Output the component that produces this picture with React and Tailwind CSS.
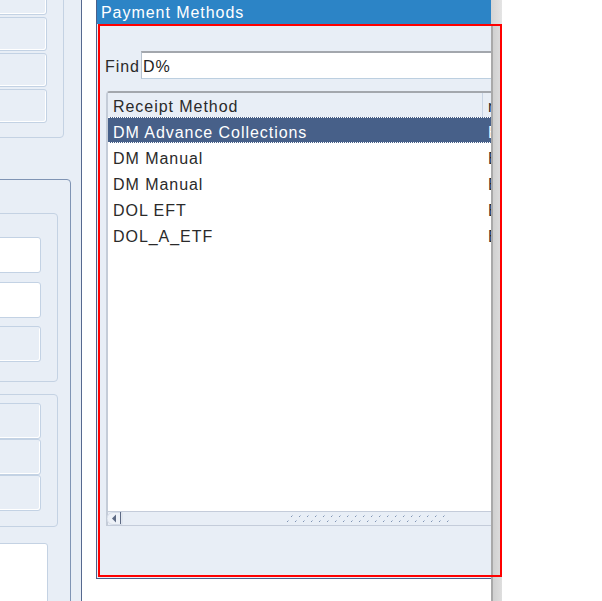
import React from "react";

const rows = [
  { name: "DM Advance Collections", bank: "Bank of America", sel: true },
  { name: "DM Manual", bank: "Bank of America" },
  { name: "DM Manual", bank: "Bank One" },
  { name: "DOL EFT", bank: "Bank One" },
  { name: "DOL_A_ETF", bank: "Bank One" },
];

function Grip() {
  const top = Array.from({ length: 20 }, (_, i) => 4 + i * 8);
  const bot = Array.from({ length: 21 }, (_, i) => 0 + i * 8);
  return (
    <svg width="164" height="10" viewBox="0 0 164 10" className="block">
      {top.map((x) => (
        <g key={"t" + x}>
          <rect x={x + 1} y={1} width="1" height="1" fill="#b8c6da" />
          <rect x={x} y={2} width="1" height="1" fill="#7f93b3" />
        </g>
      ))}
      {bot.map((x) => (
        <g key={"b" + x}>
          <rect x={x + 1} y={6} width="1" height="1" fill="#b8c6da" />
          <rect x={x} y={7} width="1" height="1" fill="#7f93b3" />
        </g>
      ))}
    </svg>
  );
}

function Btn({ h = "h-[34px]", w = "w-[66px]", white = false }) {
  return (
    <div
      className={`${h} ${w} shrink-0 rounded-[3px] border border-[#c3d2e4] ${
        white ? "bg-white" : "bg-[#e8eef6] shadow-[inset_-1px_-1px_0_#ffffff]"
      }`}
    />
  );
}

export default function App() {
  return (
    <div className="flex h-[601px] w-[602px] overflow-hidden bg-white font-['Liberation_Sans',Arial,sans-serif] text-[16px] tracking-[0.95px] relative">
      {/* left background form */}
      <div className="h-full w-[82px] shrink-0 overflow-hidden border-r border-[#56698f] bg-[#e8eef6] flex flex-col">
        <div className="-ml-[20px] -mt-[30px] h-[168px] w-[84px] shrink-0 rounded-br-[4px] border border-[#c4d2e3] pt-[10px] flex flex-col gap-[2px]">
          <Btn />
          <Btn />
          <Btn />
          <Btn />
        </div>
        <div className="-ml-[20px] mt-[41px] h-[500px] w-[91px] shrink-0 rounded-tr-[4px] border border-[#7f94b4] pt-[33px] flex flex-col">
          <div className="h-[169px] w-[77px] shrink-0 rounded-r-[4px] border border-[#c4d2e3] pt-[23px] flex flex-col">
            <Btn h="h-[36px]" w="w-[59px]" white />
            <div className="h-[9px]" />
            <Btn h="h-[36px]" w="w-[59px]" white />
            <div className="h-[8px]" />
            <Btn h="h-[36px]" w="w-[59px]" />
          </div>
          <div className="mt-[12px] h-[133px] w-[77px] shrink-0 rounded-r-[4px] border border-[#c4d2e3] pt-[8px] flex flex-col">
            <Btn h="h-[36px]" w="w-[59px]" />
            <Btn h="h-[36px]" w="w-[59px]" />
            <Btn h="h-[36px]" w="w-[59px]" />
          </div>
          <div className="mt-[16px] h-[200px] w-[67px] shrink-0 rounded-tr-[3px] border border-[#c4d2e3] bg-white" />
        </div>
      </div>

      <div className="w-[14px] shrink-0" />

      {/* window */}
      <div className="h-full w-[395px] shrink-0 flex flex-col">
        <div className="h-[579px] border-l border-b border-[#4c5f8a] flex flex-col">
          <div className="h-[24px] shrink-0 bg-[#2c84c6] pl-[4px] pt-[1px] leading-[24px] text-white whitespace-nowrap overflow-hidden">
            Payment Methods
          </div>
          <div className="flex-1 overflow-hidden bg-[#e8eef6] flex flex-col pt-[27px]">
            <div className="flex h-[28px] shrink-0 items-center pl-[8px]">
              <span className="w-[36px] shrink-0 text-[#2a2a2a] pt-[3px]">Find</span>
              <div className="h-[28px] w-[400px] shrink-0 border-t-2 border-t-[#a3a7ad] border-l border-l-[#b7c2ce] border-b border-b-[#bccfe0] bg-white pl-[1px] pt-[1px] leading-[25px] text-[#222]">
                D%
              </div>
            </div>
            <div className="ml-[9px] mt-[12px] flex h-[435px] w-[420px] shrink-0 flex-col rounded-tl-[4px] border-t-2 border-l-2 border-t-[#a3a7ad] border-l-[#c4ccd8] bg-white">
              <div className="flex h-[24px] shrink-0 bg-[#e8eef6] text-[#2a2a2a]">
                <div className="flex w-[375px] shrink-0 items-center border-r border-[#c8d4e4] pl-[5px] pt-[4px] whitespace-nowrap">
                  Receipt Method
                </div>
                <div className="flex items-center pl-[5px] pt-[4px] whitespace-nowrap">nstitution</div>
              </div>
              <div className="flex-1">
                {rows.map((r, i) => (
                  <div
                    key={i}
                    className={`flex h-[26px] whitespace-nowrap ${
                      r.sel
                        ? "bg-[#476089] text-white border-y border-dotted border-white"
                        : "text-[#2a2a2a]"
                    }`}
                  >
                    <div className="flex w-[375px] shrink-0 items-center pl-[5px] pt-[6px]">{r.name}</div>
                    <div className="flex items-center pl-[5px] pt-[6px]">{r.bank}</div>
                  </div>
                ))}
              </div>
              <div className="relative flex h-[15px] shrink-0 items-center border-y border-[#c4ccda] bg-[#e8eef6]">
                <svg width="16" height="13" viewBox="0 0 16 13" className="ml-[-1px] block">
                  <path d="M6 0.5 H15 V12.5 H6 A6 6 0 0 1 6 0.5 Z" fill="#eef2f8" stroke="#d6dde8" />
                  <path d="M9 2.5 L5 6.5 L9 10.5 Z" fill="#5d6a84" />
                  <rect x="13" y="0" width="1" height="12" fill="#5d6a84" />
                </svg>
                <div className="ml-[164px] mt-[1px]">
                  <Grip />
                </div>
              </div>
            </div>
            <div className="flex-1" />
          </div>
        </div>
      </div>

      {/* right gray strip */}
      <div className="flex h-full w-[11px] shrink-0 flex-col">
        <div className="h-[24px] shrink-0 bg-gradient-to-r from-[#d4d4d4] to-[#e4e4e4]" />
        <div className="flex-1 border-l-2 border-[#a9a9a9] bg-gradient-to-r from-[#d0d0d0] to-[#dedede]" />
      </div>

      {/* red highlight overlay */}
      <div className="pointer-events-none absolute left-[98px] top-[24px] h-[553px] w-[404px] border-2 border-[#ff0000]" />
    </div>
  );
}
